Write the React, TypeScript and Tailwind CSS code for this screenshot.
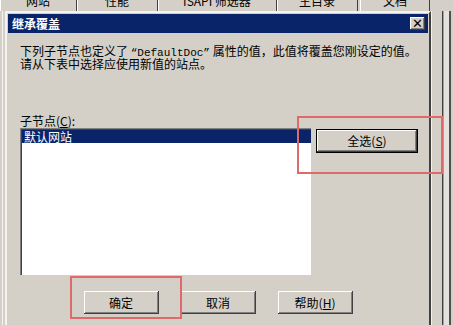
import React from 'react';

const tabs = [
	{ label: '网站', w: 'w-[77px]' },
	{ label: '性能', w: 'w-[81px]' },
	{ label: 'ISAPI 筛选器', w: 'w-[119px]' },
	{ label: '主目录', w: 'w-[81px]' },
];

const btn =
	'flex items-center justify-center bg-[#d4d0c8] shadow-[inset_-1px_-1px_0_#404040,inset_1px_1px_0_#ffffff,inset_-2px_-2px_0_#808080,inset_2px_2px_0_#d4d0c8]';

function TabStrip() {
	return (
		<div className="flex h-[11px] overflow-hidden">
			{tabs.map((t) => (
				<div
					key={t.label}
					className={`${t.w} flex justify-center border-r border-[#404040] shadow-[inset_1px_0_0_#ffffff]`}
				>
					<span className="-mt-[5px] leading-[12px]">{t.label}</span>
				</div>
			))}
			<div className="ml-[2px] flex w-[70px] justify-center border-x border-[#ffffff] border-r-[#404040]">
				<span className="-mt-[5px] leading-[12px]">文档</span>
			</div>
		</div>
	);
}

export default function App() {
	return (
		<div className="relative flex h-[325px] w-[453px] flex-col overflow-hidden bg-[#d4d0c8] font-['Noto_Sans_CJK_SC',sans-serif] text-[12px] text-black">
			<TabStrip />
			<div className="flex flex-1">
				{/* parent window edge */}
				<div className="flex w-[5px]">
					<div className="ml-[2px] w-px bg-[#f4f3ef]" />
				</div>

				{/* dialog */}
				<div className="flex w-[426px] flex-col border-l-2 border-t-2 border-r-2 border-l-[#f4f3ef] border-t-[#f4f3ef] border-r-[#404040] pl-px pt-px pr-px">
					<div className="flex h-[19px] items-center justify-between bg-[#0a246a] pl-[4px] pr-[3px]">
						<span className="font-bold leading-[12px] text-white">继承覆盖</span>
						<div className={`${btn} h-[13px] w-[15px] text-[13px] font-bold leading-none`}>
							<span className="-mt-px font-['DejaVu_Sans',sans-serif]">✕</span>
						</div>
					</div>

					<div className="flex flex-col pl-[12px] pt-[11px]">
						<p className="h-[13px] leading-[13px]">
							下列子节点也定义了{' '}
							<span className="font-['Liberation_Mono',monospace] text-[11px] leading-none">“DefaultDoc”</span>{' '}
							属性的值，此值将覆盖您刚设定的值。
						</p>
						<p className="leading-[13px]">请从下表中选择应使用新值的站点。</p>

						<p className="mt-[45px] leading-[12px]">
							子节点(<u>C</u>):
						</p>

						<div className="mt-[1px] flex items-start">
							<div className="h-[147px] w-[291px] bg-white pl-[2px] pt-[2px] shadow-[inset_1px_1px_0_#808080,inset_2px_2px_0_#404040,inset_-1px_-1px_0_#ffffff]">
								<div className="h-[13px] bg-[#0a246a] pl-[2px] leading-[13px] text-white">默认网站</div>
							</div>
							<div className="ml-[5px] mt-px border border-black">
								<div className={`${btn} h-[22px] w-[100px] leading-none`}>
									全选(<u>S</u>)
								</div>
							</div>
						</div>

						<div className="mt-[16px] flex justify-center gap-[22px] pr-[12px]">
							<div className={`${btn} h-[23px] w-[75px]`}>确定</div>
							<div className={`${btn} h-[23px] w-[75px]`}>取消</div>
							<div className={`${btn} h-[23px] w-[75px]`}>
								帮助(<u>H</u>)
							</div>
						</div>
					</div>
				</div>

				{/* parent window frames on the right */}
				<div className="flex w-[22px]">
					<div className="w-px bg-[#f4f3ef]" />
					<div className="w-[10px]" />
					<div className="w-px bg-[#404040]" />
					<div className="w-px bg-[#a0a0a0]" />
					<div className="w-[5px] bg-[#e4e2de]" />
					<div className="w-[2px] bg-[#505050]" />
					<div className="w-[2px]" />
				</div>
			</div>

			{/* red annotation boxes */}
			<div className="absolute left-[297px] top-[116px] h-[58px] w-[146px] border-2 border-[#e06a6a]" />
			<div className="absolute left-[70px] top-[276px] h-[43px] w-[112px] border-2 border-[#e06a6a]" />
		</div>
	);
}
